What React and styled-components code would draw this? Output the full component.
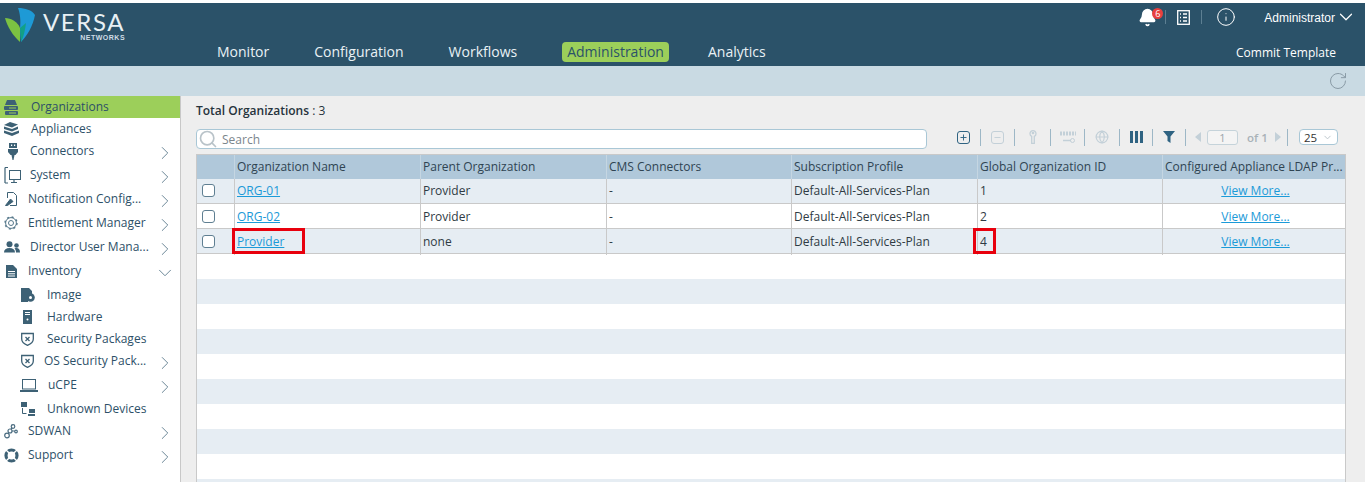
import React from 'react';
import styled, { createGlobalStyle } from 'styled-components';
import { Bell, ChevronDown, ChevronRight, Info, RotateCw, Search, Plus, Minus, Globe } from 'lucide-react';

const colors = {
  header: '#2b5269',
  subbar: '#c9dae3',
  page: '#eeeeee',
  green: '#9ccf5a',
  navy: '#2d5068',
  thead: '#b0c8da',
  stripe: '#e6edf3',
  line: '#c9c9c9',
  link: '#1b9ad8',
  text: '#2f3b44',
  faded: '#c3d0d8',
  toolSep: '#9db7c6',
  toolBlue: '#2f6382',
};

const GlobalStyle = createGlobalStyle`
  html, body { margin: 0; padding: 0; height: 482px; overflow: hidden; background: #fff; }
  body { font-family: "Open Sans", "Liberation Sans", sans-serif; font-size: 12px; color: ${colors.text}; }
  * { box-sizing: border-box; }
`;

const Page = styled.div`
  width: 1365px;
  height: 482px;
  display: flex;
  flex-direction: column;
  overflow: hidden;
  padding-top: 3px;
`;

const Header = styled.header`
  height: 63px;
  flex: none;
  background: ${colors.header};
  display: flex;
  justify-content: space-between;
  color: #fff;
`;

const Brand = styled.div`
  width: 217px;
  display: flex;
  align-items: flex-start;
  padding: 5px 0 0 5px;
`;

const BrandText = styled.div`
  margin-left: 7px;
  display: flex;
  flex-direction: column;
  align-items: flex-end;
`;

const BrandName = styled.span`
  font-family: "Lato", sans-serif;
  font-size: 24px;
  line-height: 24px;
  margin-top: 2px;
  letter-spacing: 1.6px;
  color: #e8f0f4;
`;

const BrandSub = styled.span`
  font-family: "Liberation Sans", sans-serif;
  font-weight: 700;
  font-size: 7px;
  line-height: 7px;
  letter-spacing: 0.5px;
  color: #cfdde5;
`;

const Nav = styled.nav`
  flex: 1;
  display: flex;
  align-items: flex-start;
  padding-top: 39px;
`;

const NavItem = styled.a`
  font-size: 14px;
  line-height: 20px;
  color: #e9f1f5;
  margin-right: ${p => p.$gap}px;
  ${p => p.$active && `
    background: ${colors.green};
    color: ${colors.header};
    border-radius: 4px;
    padding: 0 5px;
  `}
`;

const HeaderRight = styled.div`
  width: 230px;
  display: flex;
  flex-direction: column;
  align-items: flex-end;
  padding-right: 29px;
`;

const StatusBar = styled.div`
  height: 28px;
  display: flex;
  align-items: center;
  margin-right: -21px;
`;

const BellWrap = styled.span`
  position: relative;
  display: flex;
  width: 19px;
  margin-right: 8px;
`;

const Badge = styled.span`
  position: absolute;
  top: 0;
  left: 14px;
  width: 11px;
  height: 11px;
  border-radius: 50%;
  background: #e8403f;
  color: #fff;
  font-size: 9px;
  line-height: 11px;
  text-align: center;
`;

const StatusSep = styled.span`
  width: 1px;
  height: 14px;
  background: #5d7f92;
  margin: 0 ${p => p.$right}px 0 ${p => p.$left}px;
`;

const UserName = styled.span`
  font-family: "Liberation Sans", sans-serif;
  font-size: 12px;
  color: #fff;
  margin-left: 28px;
  padding-top: 1px;
`;

const CommitLink = styled.a`
  margin-top: 14px;
  font-size: 12px;
  line-height: 16px;
  color: #fff;
`;

const SubBar = styled.div`
  height: 30px;
  flex: none;
  background: ${colors.subbar};
  display: flex;
  justify-content: flex-end;
  align-items: center;
  padding-right: 17px;
  color: #8a9ba6;
`;

const Body = styled.div`
  flex: 1;
  display: flex;
  min-height: 0;
`;

const Sidebar = styled.aside`
  width: 181px;
  flex: none;
  background: #fff;
  border-right: 1px solid #c8c8c8;
`;

const SideRow = styled.div`
  height: ${p => p.$h}px;
  display: flex;
  align-items: center;
  padding-left: ${p => p.$indent}px;
  background: ${p => (p.$active ? colors.green : 'transparent')};
  color: ${colors.navy};
`;

const SideIcon = styled.span`
  width: ${p => p.$w}px;
  flex: none;
  display: flex;
  align-items: center;
`;

const SideLabel = styled.span`
  flex: 1;
  white-space: nowrap;
  line-height: 16px;
`;

const SideArrow = styled.span`
  display: flex;
  width: 26px;
  flex: none;
  margin-top: 3px;
  color: #5f7d8e;
`;

const Content = styled.main`
  flex: 1;
  background: ${colors.page};
  padding: 0 0 0 15px;
  min-width: 0;
`;

const Total = styled.div`
  height: 33px;
  padding-top: 7px;
  line-height: 16px;
  color: #26333c;
  font-weight: 600;
  span { font-weight: 400; }
`;

const ToolRow = styled.div`
  height: 24px;
  display: flex;
  align-items: flex-start;
`;

const SearchBox = styled.div`
  width: 731px;
  height: 20px;
  flex: none;
  background: #fff;
  border: 1px solid #a9c7d6;
  border-radius: 4px;
  display: flex;
  align-items: center;
  padding-left: 1px;
  color: #7b858c;
  line-height: 16px;
`;

const SearchText = styled.span`
  margin-left: 4px;
  padding-top: 1px;
`;

const Tools = styled.div`
  margin-left: 20px;
  height: 16px;
  display: flex;
  align-items: center;
`;

const ToolCell = styled.span`
  width: ${p => p.$w}px;
  height: 17px;
  flex: none;
  display: flex;
  align-items: center;
  justify-content: center;
  border-right: 1px solid ${colors.toolSep};
  color: ${p => (p.$off ? colors.faded : colors.toolBlue)};
`;

const Arrow = styled.span`
  width: 0;
  height: 0;
  border-top: 5px solid transparent;
  border-bottom: 5px solid transparent;
  ${p => (p.$dir === 'left' ? 'border-right' : 'border-left')}: 6px solid ${colors.faded};
`;

const PageBox = styled.span`
  width: 31px;
  height: 15px;
  margin: 0 9px 0 6px;
  background: #f4f4f4;
  border: 1px solid #c5d3da;
  border-radius: 3px;
  text-align: center;
  font-size: 11px;
  line-height: 13px;
  color: #9aa5ab;
`;

const OfText = styled.span`
  width: 28px;
  flex: none;
  font-weight: 600;
  color: #a9b2b8;
  font-size: 11.5px;
`;

const Pager = styled.div`
  height: 17px;
  width: 102px;
  flex: none;
  display: flex;
  align-items: center;
  padding-left: 9px;
  border-right: 1px solid ${colors.toolSep};
`;

const PageSize = styled.span`
  margin-left: 11px;
  width: 39px;
  height: 16px;
  flex: none;
  background: #fff;
  border: 1px solid #a9c7d6;
  border-radius: 4px;
  display: flex;
  align-items: center;
  justify-content: space-between;
  padding: 0 4px;
  font-size: 11.5px;
  color: #333;
`;

const COLUMNS = '38px 186px 186px 185px 186px 185px 183px';

const Table = styled.div`
  width: 1150px;
  margin-top: 1px;
  background: #fff;
  border: 1px solid ${colors.line};
  border-bottom: 0;
`;

const HeadRow = styled.div`
  height: 24px;
  display: grid;
  grid-template-columns: ${COLUMNS};
  background: ${colors.thead};
`;

const HeadCell = styled.div`
  padding-left: 2px;
  line-height: 24px;
  white-space: nowrap;
  overflow: hidden;
  text-overflow: ellipsis;
  color: #2f4452;
  border-right: 1px solid #c5d6e2;
  &:last-child { border-right: 0; }
`;

const Row = styled.div`
  height: 25px;
  display: grid;
  grid-template-columns: ${COLUMNS};
  line-height: 24px;
  background: ${p => (p.$striped ? colors.stripe : '#fff')};
  border-bottom: 1px solid ${colors.line};
  & + & { line-height: 26px; }
`;

const Cell = styled.div`
  position: relative;
  padding-left: 2px;
  white-space: nowrap;
  border-right: 1px solid ${colors.line};
  text-align: ${p => (p.$center ? 'center' : 'left')};
  &:last-child { border-right: 0; }
`;

const CheckCell = styled.div`
  display: flex;
  align-items: center;
  padding-left: 5px;
  border-right: 1px solid ${colors.line};
`;

const CheckBox = styled.span`
  width: 13px;
  height: 13px;
  background: #fff;
  border: 1px solid #5f7f92;
  border-radius: 3px;
  margin-top: -1px;
`;

const Link = styled.a`
  color: ${colors.link};
  text-decoration: underline;
`;

// red call-out boxes drawn on top of the grid
const Marker = styled.span`
  position: absolute;
  top: -1px;
  left: ${p => p.$left}px;
  width: ${p => p.$w}px;
  height: 26px;
  border: 3px solid #e8000d;
  pointer-events: none;
`;

const EmptyRow = styled.div`
  height: 25px;
  background: ${p => (p.$striped ? colors.stripe : '#fff')};
`;

const OrgIcon = () => (
  <svg width="15" height="15" viewBox="0 0 15 15" fill="#3d6175">
    <path d="M3 0h8l2 5H1z" />
    <rect x="0" y="6" width="14" height="4" rx="1" />
    <rect x="1" y="11" width="13" height="4" rx="1" />
    <path d="M5 8h7M5 13h7" stroke={colors.green} />
  </svg>
);

const AppliancesIcon = () => (
  <svg width="15" height="14" viewBox="0 0 15 14" fill="#3d6175">
    <path d="M0 3l6-3 8 2.500L8 5.500z" />
    <path d="M0 4.500l8 2.500 6-2.500V7L8 9.500 0 7z" />
    <path d="M0 8.500l8 2.500 7-2.500V11l-7 3-8-3z" />
  </svg>
);

const PlugIcon = () => (
  <svg width="10" height="17" viewBox="0 0 10 17" fill="#3d6175">
    <rect x="1" y="0" width="8" height="5" />
    <rect x="3" y="1.500" width="1.200" height="1.500" fill="#fff" />
    <rect x="6" y="1.500" width="1.200" height="1.500" fill="#fff" />
    <path d="M0 6h10v3l-2.500 3h-5L0 9z" />
    <path d="M3.500 12h3L5.500 17h-1z" />
  </svg>
);

const MonitorIcon = () => (
  <svg width="17" height="17" viewBox="0 0 17 17" fill="none" stroke="#3d6175">
    <rect x="5.500" y="3.500" width="11" height="9" />
    <path d="M1 .5h3M1 .5v15.500M1 16h3M7 15.500h6M10 13v2" strokeWidth="1.200" />
  </svg>
);

const DocPenIcon = () => (
  <svg width="12" height="14" viewBox="0 0 12 14" fill="none" stroke="#3d6175">
    <path d="M2.500 6V.5h6l3 3v10H5" />
    <path d="M.5 13.500l5-6.500 2.500 2.500-5.500 4z" fill="#3d6175" />
  </svg>
);

const GearIcon = () => (
  <svg width="14" height="14" viewBox="0 0 14 14" fill="none" stroke="#55778a">
    <circle cx="7" cy="7" r="2.500" />
    <circle cx="7" cy="7" r="5.400" />
    <circle cx="7" cy="7" r="6" strokeWidth="1.400" strokeDasharray="2 2.700" />
  </svg>
);

const UsersIcon = () => (
  <svg width="16" height="12" viewBox="0 0 16 12" fill="#3d6175">
    <circle cx="5.500" cy="3.200" r="3" />
    <path d="M0 11.500c0-3 2-4.500 5.500-4.500s5.500 1.500 5.500 4.500z" />
    <circle cx="12.500" cy="4.500" r="2.300" />
    <path d="M12 11.500c0-2-.5-3-1.500-4 2.500-1 5.500-.5 5.500 4z" />
  </svg>
);

const InventoryIcon = () => (
  <svg width="11" height="13" viewBox="0 0 11 13" fill="#3d6175">
    <path d="M0 0h7l4 4v9H0z" />
    <path d="M2 6.500h7M2 8.800h7M2 11h7" stroke="#fff" />
  </svg>
);

const ImageIcon = () => (
  <svg width="14" height="14" viewBox="0 0 14 14" fill="#3d6175">
    <path d="M0 0h8l3 3v3H7v8H0z" />
    <circle cx="9.500" cy="9.500" r="4.300" />
    <circle cx="9.500" cy="9.500" r="1.500" fill="#fff" />
  </svg>
);

const HardwareIcon = () => (
  <svg width="9" height="14" viewBox="0 0 9 14" fill="#3d6175">
    <rect width="9" height="14" />
    <path d="M2 2.500h5M2 4.500h5" stroke="#fff" />
    <circle cx="4.500" cy="9.500" r="1" fill="#fff" />
  </svg>
);

const ShieldIcon = () => (
  <svg width="13" height="14" viewBox="0 0 13 14" fill="none" stroke="#3d6175">
    <path d="M.7 1.500h11.600V7c0 3-2.600 5-5.800 6.300C3.300 12 .7 10 .7 7z" strokeWidth="1.300" />
    <path d="M4.500 5l4 4M8.500 5l-4 4" strokeWidth="1.300" />
  </svg>
);

const LaptopIcon = () => (
  <svg width="18" height="13" viewBox="0 0 18 13" fill="none" stroke="#3d6175">
    <rect x="2.500" y=".5" width="13" height="9.500" />
    <path d="M0 12h18" strokeWidth="2" />
  </svg>
);

const DevicesIcon = () => (
  <svg width="15" height="14" viewBox="0 0 15 14" fill="#3d6175">
    <rect x="1" y="0" width="6" height="5" />
    <rect x="9" y="7" width="6" height="4" />
    <rect x="8" y="12" width="7" height="2" />
    <path d="M2.500 6v5.500h4" fill="none" stroke="#3d6175" />
  </svg>
);

const NetworkIcon = () => (
  <svg width="14" height="15" viewBox="0 0 14 15" fill="none" stroke="#4a6c80" strokeWidth="1.200">
    <circle cx="3" cy="11.500" r="2.300" />
    <circle cx="9" cy="2.500" r="1.800" />
    <circle cx="6" cy="7" r="2" />
    <circle cx="12" cy="7.500" r="1.300" />
    <path d="M4.500 9.500l.5-1M7 5.200l1.200-1.500M8 7h2.700" />
  </svg>
);

const LifebuoyIcon = () => (
  <svg width="15" height="15" viewBox="0 0 15 15" fill="none">
    <circle cx="7.500" cy="7.500" r="5.500" stroke="#3d6175" strokeWidth="3.200" />
    <path d="M2 2l3.600 3.600M13 2L9.400 5.600M2 13l3.600-3.600M13 13L9.400 9.400" stroke="#fff" strokeWidth="1.400" />
  </svg>
);

const LogoMark = () => (
  <svg width="31" height="35" viewBox="0 0 31 35">
    <path d="M0 10C6 10 13 14 15 20L15 34C8 28 2 18 0 10z" fill="#7cc242" />
    <path d="M13 0C20 0 27 2 30 7C28 18 22 28 16 34L15 20C16 13 15 5 13 0z" fill="#1e9ad6" />
    <path d="M16 34L15 20L21 15C20 22 19 28 16 34z" fill="#12a085" />
  </svg>
);

const ChecklistIcon = () => (
  <svg width="13" height="15" viewBox="0 0 13 15" fill="none" stroke="#fff">
    <rect x=".7" y=".7" width="11.600" height="13.600" strokeWidth="1.300" />
    <path d="M3 4h1M6 4h4M3 7.500h1M6 7.500h4M3 11h1M6 11h4" strokeWidth="1.300" />
  </svg>
);

const KeyIcon = () => (
  <svg width="8" height="14" viewBox="0 0 8 14" fill="none" stroke="currentColor" strokeWidth="1.300">
    <path d="M4 .7a3 3 0 0 1 3 3c0 1.300-.8 2.200-1.700 2.700v6.900H2.700V6.400C1.800 5.900 1 5 1 3.700a3 3 0 0 1 3-3z" />
    <circle cx="4" cy="3" r=".7" />
  </svg>
);

const ConfigIcon = () => (
  <svg width="16" height="13" viewBox="0 0 16 13" fill="none" stroke="currentColor">
    <path d="M0 2.500h16" strokeWidth="4" strokeDasharray="2 1" />
    <path d="M3 9.500h8" strokeWidth="1.500" />
    <circle cx="12.500" cy="9.500" r="2" />
  </svg>
);

const ColumnsIcon = () => (
  <svg width="13" height="12" viewBox="0 0 13 12" fill="currentColor">
    <rect x="0" width="3" height="12" />
    <rect x="5" width="3" height="12" />
    <rect x="10" width="3" height="12" />
  </svg>
);

const FunnelIcon = () => (
  <svg width="12" height="12" viewBox="0 0 12 12" fill="currentColor">
    <path d="M0 0h12L7.500 5.500V12L4.500 10V5.500z" />
  </svg>
);

const SquareFrame = styled.span`
  width: 13px;
  height: 13px;
  border: 1.500px solid currentColor;
  border-radius: 3px;
  display: flex;
  align-items: center;
  justify-content: center;
`;

const SquareTool = ({ icon: Icon }) => (
  <SquareFrame>
    <Icon size={9} strokeWidth={2.500} />
  </SquareFrame>
);

const menu = [
  { label: 'Organizations', Icon: OrgIcon, h: 22, indent: 4, w: 27, active: true },
  { label: 'Appliances', Icon: AppliancesIcon, h: 22, indent: 4, w: 27 },
  { label: 'Connectors', Icon: PlugIcon, h: 22, indent: 8, w: 22, more: 'right' },
  { label: 'System', Icon: MonitorIcon, h: 26, indent: 4, w: 26, more: 'right' },
  { label: 'Notification Config...', Icon: DocPenIcon, h: 22, indent: 5, w: 23, more: 'right' },
  { label: 'Entitlement Manager', Icon: GearIcon, h: 26, indent: 4, w: 24, more: 'right' },
  { label: 'Director User Mana...', Icon: UsersIcon, h: 22, indent: 4, w: 26, more: 'right' },
  { label: 'Inventory', Icon: InventoryIcon, h: 26, indent: 6, w: 22, more: 'down' },
  { label: 'Image', Icon: ImageIcon, h: 22, indent: 21, w: 26 },
  { label: 'Hardware', Icon: HardwareIcon, h: 22, indent: 23, w: 24 },
  { label: 'Security Packages', Icon: ShieldIcon, h: 22, indent: 21, w: 26 },
  { label: 'OS Security Pack...', Icon: ShieldIcon, h: 22, indent: 21, w: 23, more: 'right' },
  { label: 'uCPE', Icon: LaptopIcon, h: 26, indent: 20, w: 28, more: 'right' },
  { label: 'Unknown Devices', Icon: DevicesIcon, h: 22, indent: 20, w: 27 },
  { label: 'SDWAN', Icon: NetworkIcon, h: 22, indent: 4, w: 24, more: 'right' },
  { label: 'Support', Icon: LifebuoyIcon, h: 26, indent: 4, w: 24, more: 'right' },
];

const columns = ['', 'Organization Name', 'Parent Organization', 'CMS Connectors', 'Subscription Profile', 'Global Organization ID', 'Configured Appliance LDAP Pr...'];

const orgs = [
  { name: 'ORG-01', parent: 'Provider', id: '1' },
  { name: 'ORG-02', parent: 'Provider', id: '2' },
  { name: 'Provider', parent: 'none', id: '4', marked: true },
];

const App = () => (
  <Page>
    <GlobalStyle />
    <Header>
      <Brand>
        <LogoMark />
        <BrandText>
          <BrandName>VERSA</BrandName>
          <BrandSub>NETWORKS</BrandSub>
        </BrandText>
      </Brand>
      <Nav>
        <NavItem $gap={45}>Monitor</NavItem>
        <NavItem $gap={45}>Configuration</NavItem>
        <NavItem $gap={45}>Workflows</NavItem>
        <NavItem $gap={39} $active>Administration</NavItem>
        <NavItem $gap={0}>Analytics</NavItem>
      </Nav>
      <HeaderRight>
        <StatusBar>
          <BellWrap>
            <Bell size={19} fill="#fff" color="#fff" />
            <Badge>6</Badge>
          </BellWrap>
          <StatusSep $left={0} $right={11} />
          <ChecklistIcon />
          <StatusSep $left={11} $right={14} />
          <Info size={20} color="#fff" strokeWidth={1.200} />
          <UserName>Administrator</UserName>
          <ChevronDown size={22} color="#fff" strokeWidth={1.300} />
        </StatusBar>
        <CommitLink>Commit Template</CommitLink>
      </HeaderRight>
    </Header>
    <SubBar>
      <RotateCw size={20} strokeWidth={1.200} />
    </SubBar>
    <Body>
      <Sidebar>
        {menu.map(({ label, Icon, h, indent, w, more, active }) => (
          <SideRow key={label} $h={h} $indent={indent} $active={active}>
            <SideIcon $w={w}><Icon /></SideIcon>
            <SideLabel>{label}</SideLabel>
            {more && (
              <SideArrow>
                {more === 'right' ? <ChevronRight size={22} strokeWidth={1} /> : <ChevronDown size={22} strokeWidth={1} />}
              </SideArrow>
            )}
          </SideRow>
        ))}
      </Sidebar>
      <Content>
        <Total>Total Organizations <span>: 3</span></Total>
        <ToolRow>
          <SearchBox>
            <Search size={20} color="#b9c3c9" strokeWidth={2} />
            <SearchText>Search</SearchText>
          </SearchBox>
          <Tools>
            <ToolCell $w={34}><SquareTool icon={Plus} /></ToolCell>
            <ToolCell $w={34} $off><SquareTool icon={Minus} /></ToolCell>
            <ToolCell $w={36} $off><KeyIcon /></ToolCell>
            <ToolCell $w={34} $off><ConfigIcon /></ToolCell>
            <ToolCell $w={35} $off><Globe size={14} strokeWidth={2} /></ToolCell>
            <ToolCell $w={33}><ColumnsIcon /></ToolCell>
            <ToolCell $w={33}><FunnelIcon /></ToolCell>
            <Pager>
              <Arrow $dir="left" />
              <PageBox>1</PageBox>
              <OfText>of 1</OfText>
              <Arrow $dir="right" />
            </Pager>
            <PageSize>25 <ChevronDown size={11} color="#b9c3c9" /></PageSize>
          </Tools>
        </ToolRow>
        <Table>
          <HeadRow>
            {columns.map(col => <HeadCell key={col || 'select'}>{col}</HeadCell>)}
          </HeadRow>
          {orgs.map((org, i) => (
            <Row key={org.name} $striped={i % 2 === 0}>
              <CheckCell><CheckBox /></CheckCell>
              <Cell>
                <Link>{org.name}</Link>
                {org.marked && <Marker $left={-3} $w={73} />}
              </Cell>
              <Cell>{org.parent}</Cell>
              <Cell>-</Cell>
              <Cell>Default-All-Services-Plan</Cell>
              <Cell>
                {org.id}
                {org.marked && <Marker $left={-5} $w={23} />}
              </Cell>
              <Cell $center><Link>View More...</Link></Cell>
            </Row>
          ))}
          {Array.from({ length: 10 }, (_, i) => <EmptyRow key={i} $striped={i % 2 === 1} />)}
        </Table>
      </Content>
    </Body>
  </Page>
);

export default App;
